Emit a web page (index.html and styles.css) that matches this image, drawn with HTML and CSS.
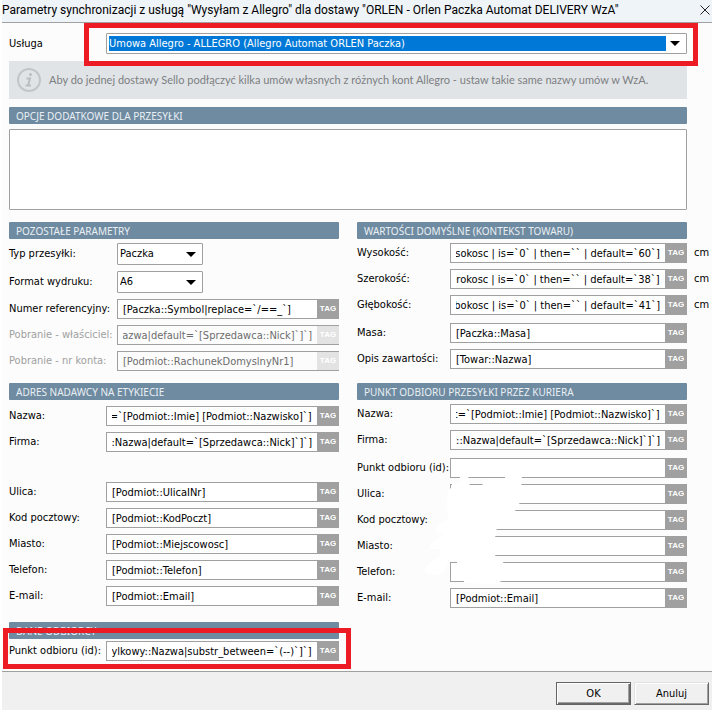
FILE: index.html
```
<!DOCTYPE html>
<html lang="pl">
<head>
    <meta charset="utf-8">
    <meta name="viewport" content="width=device-width, initial-scale=1" />
    <title>Parametry synchronizacji</title>
    <link rel="stylesheet" href="styles.css">
</head>
<body>
    <div class="titlebar">
        <h1>Parametry synchronizacji z usługą "Wysyłam z Allegro" dla dostawy "ORLEN - Orlen Paczka Automat DELIVERY WzA"</h1>
        <button type="button" class="close" aria-label="Zamknij">
            <svg width="10" height="10" viewBox="0 0 10 10"><path d="M0.5 0.5L9.5 9.5M9.5 0.5L0.5 9.5" stroke="#222" fill="none" /></svg>
        </button>
    </div>
    <form class="dialog">
        <div class="content">
            <div class="row service">
                <label for="usluga">Usługa</label>
                <div class="combo">
                    <select id="usluga" class="selected">
                        <option>Umowa Allegro - ALLEGRO (Allegro Automat ORLEN Paczka)</option>
                    </select>
                    <svg class="arrow" width="10" height="5" viewBox="0 0 10 5"><path d="M0 0H10L5 5Z" /></svg>
                </div>
            </div>
            <div class="info">
                <svg width="24" height="24" viewBox="0 0 24 24">
                    <circle cx="12" cy="12" r="11" fill="none" stroke="#c3c5c7" stroke-width="2" />
                    <circle cx="13.5" cy="6.5" r="1.5" fill="#bbbdbf" />
                    <path d="M9.5 10.5H13L11 17.5H14M8.5 17.5H11" fill="none" stroke="#bbbdbf" stroke-width="2" />
                </svg>
                <p>Aby do jednej dostawy Sello podłączyć kilka umów własnych z różnych kont Allegro - ustaw takie same nazwy umów w WzA.</p>
            </div>
            <h2 id="opcje">OPCJE DODATKOWE DLA PRZESYŁKI</h2>
            <textarea aria-labelledby="opcje"></textarea>

            <div class="columns">
                <section class="params">
                    <h2>POZOSTAŁE PARAMETRY</h2>
                    <div class="row">
                        <label for="typ">Typ przesyłki:</label>
                        <div class="combo small">
                            <select id="typ"><option>Paczka</option></select>
                            <svg class="arrow" width="10" height="5" viewBox="0 0 10 5"><path d="M0 0H10L5 5Z" /></svg>
                        </div>
                    </div>
                    <div class="row">
                        <label for="format">Format wydruku:</label>
                        <div class="combo small">
                            <select id="format"><option>A6</option></select>
                            <svg class="arrow" width="10" height="5" viewBox="0 0 10 5"><path d="M0 0H10L5 5Z" /></svg>
                        </div>
                    </div>
                    <div class="row">
                        <label for="numer">Numer referencyjny:</label>
                        <input id="numer" value="[Paczka::Symbol|replace=`/==_`]"><button type="button" class="tag">TAG</button>
                    </div>
                    <div class="row off">
                        <label for="wlasciciel">Pobranie - właściciel:</label>
                        <input id="wlasciciel" class="end" disabled value="[Podmiot::Nazwa|default=`[Sprzedawca::Nick]`]`]"><button type="button" class="tag" disabled>TAG</button>
                    </div>
                    <div class="row off">
                        <label for="konto">Pobranie - nr konta:</label>
                        <input id="konto" disabled value="[Podmiot::RachunekDomyslnyNr1]"><button type="button" class="tag" disabled>TAG</button>
                    </div>
                </section>

                <section>
                    <h2>WARTOŚCI DOMYŚLNE (KONTEKST TOWARU)</h2>
                    <div class="row">
                        <label for="wys">Wysokość:</label>
                        <input id="wys" class="end" value="[Towar::Wysokosc | is=`0` | then=`` | default=`60`]"><button type="button" class="tag">TAG</button>
                        <span class="unit">cm</span>
                    </div>
                    <div class="row">
                        <label for="szer">Szerokość:</label>
                        <input id="szer" class="end" value="[Towar::Szerokosc | is=`0` | then=`` | default=`38`]"><button type="button" class="tag">TAG</button>
                        <span class="unit">cm</span>
                    </div>
                    <div class="row">
                        <label for="gleb">Głębokość:</label>
                        <input id="gleb" class="end" value="[Towar::Glebokosc | is=`0` | then=`` | default=`41`]"><button type="button" class="tag">TAG</button>
                        <span class="unit">cm</span>
                    </div>
                    <div class="row apart">
                        <label for="masa">Masa:</label>
                        <input id="masa" value="[Paczka::Masa]"><button type="button" class="tag">TAG</button>
                    </div>
                    <div class="row">
                        <label for="opis">Opis zawartości:</label>
                        <input id="opis" value="[Towar::Nazwa]"><button type="button" class="tag">TAG</button>
                    </div>
                </section>

                <section class="sender">
                    <h2>ADRES NADAWCY NA ETYKIECIE</h2>
                    <div class="row apart">
                        <label for="n-nazwa">Nazwa:</label>
                        <input id="n-nazwa" class="end" value="[Podmiot::Nazwa|default=`[Podmiot::Imie] [Podmiot::Nazwisko]`]"><button type="button" class="tag">TAG</button>
                    </div>
                    <div class="row">
                        <label for="n-firma">Firma:</label>
                        <input id="n-firma" class="end" value="[Podmiot::Nazwa|default=`[Sprzedawca::Nick]`]`]"><button type="button" class="tag">TAG</button>
                    </div>
                    <div class="row street">
                        <label for="n-ulica">Ulica:</label>
                        <input id="n-ulica" value="[Podmiot::UlicaINr]"><button type="button" class="tag">TAG</button>
                    </div>
                    <div class="row">
                        <label for="n-kod">Kod pocztowy:</label>
                        <input id="n-kod" value="[Podmiot::KodPoczt]"><button type="button" class="tag">TAG</button>
                    </div>
                    <div class="row">
                        <label for="n-miasto">Miasto:</label>
                        <input id="n-miasto" value="[Podmiot::Miejscowosc]"><button type="button" class="tag">TAG</button>
                    </div>
                    <div class="row">
                        <label for="n-telefon">Telefon:</label>
                        <input id="n-telefon" value="[Podmiot::Telefon]"><button type="button" class="tag">TAG</button>
                    </div>
                    <div class="row">
                        <label for="n-email">E-mail:</label>
                        <input id="n-email" value="[Podmiot::Email]"><button type="button" class="tag">TAG</button>
                    </div>
                </section>

                <section class="pickup">
                    <h2>PUNKT ODBIORU PRZESYŁKI PRZEZ KURIERA</h2>
                    <div class="row">
                        <label for="p-nazwa">Nazwa:</label>
                        <input id="p-nazwa" class="end" value="[Podmiot::Nazwa|default=`[Podmiot::Imie] [Podmiot::Nazwisko]`]"><button type="button" class="tag">TAG</button>
                    </div>
                    <div class="row">
                        <label for="p-firma">Firma:</label>
                        <input id="p-firma" class="end" value="[Podmiot::Nazwa|default=`[Sprzedawca::Nick]`]`]"><button type="button" class="tag">TAG</button>
                    </div>
                    <div class="row apart">
                        <label for="p-punkt">Punkt odbioru (id):</label>
                        <input id="p-punkt"><button type="button" class="tag">TAG</button>
                    </div>
                    <div class="row">
                        <label for="p-ulica">Ulica:</label>
                        <input id="p-ulica"><button type="button" class="tag">TAG</button>
                    </div>
                    <div class="row">
                        <label for="p-kod">Kod pocztowy:</label>
                        <input id="p-kod"><button type="button" class="tag">TAG</button>
                    </div>
                    <div class="row">
                        <label for="p-miasto">Miasto:</label>
                        <input id="p-miasto"><button type="button" class="tag">TAG</button>
                    </div>
                    <div class="row">
                        <label for="p-telefon">Telefon:</label>
                        <input id="p-telefon"><button type="button" class="tag">TAG</button>
                    </div>
                    <div class="row">
                        <label for="p-email">E-mail:</label>
                        <input id="p-email" value="[Podmiot::Email]"><button type="button" class="tag">TAG</button>
                    </div>
                    <!-- white brush strokes over the address -->
                    <svg class="smear" width="110" height="120" viewBox="420 470 110 120" fill="#fff">
                        <path d="M460 474Q464 471 468 475L469 482L470 486H482L484 480L505 479V474Q514 472 522 475L521 490L519 506L514 512L496 530L494 548L496 560L503 561L505 578Q498 586 480 584L464 582V575L453 571V569L457 568V560H448Q447 572 438 575L426 574Q423 570 429 564L440 556V549H430Q428 546 436 540L445 534L437 533Q434 528 440 524L448 518L447 500Q447 490 452 487L452 483H460Z" />
                    </svg>
                </section>

                <section class="recipient">
                    <h2>DANE ODBIORCY</h2>
                    <div class="row">
                        <label for="o-punkt">Punkt odbioru (id):</label>
                        <input id="o-punkt" class="end" value="[PunktWysylkowy::Nazwa|substr_between=`(--)`]`]"><button type="button" class="tag">TAG</button>
                    </div>
                </section>
            </div>
        </div>
        <div class="footer">
            <button type="button" class="btn default">OK</button>
            <button type="button" class="btn">Anuluj</button>
        </div>
    </form>

    <script src="script.js"></script>
</body>
</html>
```
FILE: styles.css
```
* {
    box-sizing: border-box;
}

body {
    margin: 0 0 0 2px;
    min-height: 100vh;
    display: flex;
    flex-direction: column;
    background-color: #fff;
    color: #000;
    font-family: "DejaVu Sans Condensed", "DejaVu Sans", sans-serif;
    font-size: 11px;
    line-height: 14px;
}

input, select, textarea, button {
    margin: 0;
    font: inherit;
    color: inherit;
}

.titlebar {
    display: flex;
    align-items: center;
    justify-content: space-between;
    height: 23px;
    padding-bottom: 2px;
    border-bottom: 1px solid #a0a0a0;
    background-color: #eff4f9;
}

h1 {
    margin: 0;
    font-family: Roboto, sans-serif;
    font-size: 12px;
    font-weight: normal;
    line-height: 18px;
    white-space: nowrap;
}

.close {
    display: flex;
    padding: 0 2px;
    border: 0;
    background: none;
}

.dialog {
    flex: 1;
    display: flex;
    flex-direction: column;
    background-color: #fcfcfc;
}

.content {
    padding: 10px 25px 10px 7px;
}

h2 {
    height: 17px;
    margin: 0 0 4px;
    padding-left: 7px;
    border-radius: 1px;
    background-color: #6f8ba1;
    color: #e9eff4;
    font-family: "Noto Sans", sans-serif;
    font-size: 10px;
    font-weight: normal;
    line-height: 18px;
}

.row {
    display: flex;
    align-items: center;
    margin-bottom: 6px;
}

.row label {
    flex: none;
    width: 93px;
    white-space: nowrap;
}

.row input {
    flex: 1;
    min-width: 0;
    height: 20px;
    padding: 0 5px;
    border: 1px solid #a0a0a0;
    border-right: 0;
    border-radius: 0;
    background-color: #fff;
}

.apart {
    margin-top: 8px;
}

.service label, .sender label, .recipient label {
    width: 97px;
}

.params label {
    width: 108px;
}

.tag {
    width: 22px;
    height: 20px;
    padding: 0;
    border: 0;
    background-color: #a0a0a0;
    color: #fff;
    font-family: "Liberation Sans", sans-serif;
    font-size: 8px;
    font-weight: bold;
}

.off {
    color: #a0a0a0;
}

.off input {
    color: #6d6d6d;
    background-color: #fcfcfc;
}

.off .tag {
    border: 1px solid #a0a0a0;
    border-width: 1px 0;
    background-color: #e3e3e3;
    color: #fff;
}

.unit {
    width: 18px;
    margin: 0 -25px 0 7px;
}

.combo {
    flex: 1;
    display: flex;
    align-items: center;
    height: 21px;
    padding: 2px 6px 2px 2px;
    border: 1px solid #a0a0a0;
    border-radius: 1px;
    background-color: #fff;
}

.combo select {
    flex: 1;
    min-width: 0;
    height: 15px;
    padding: 0;
    border: 0;
    border-radius: 0;
    appearance: none;
    background: none;
}

.combo .selected {
    background-color: #0078d7;
    color: #fff;
}

.arrow {
    margin-left: 4px;
}

.small {
    flex: none;
    width: 86px;
    height: 22px;
}

/* red marker frames */
.service, .recipient .row {
    position: relative;
}

.service::after, .recipient .row::after {
    content: "";
    position: absolute;
    border: 5px solid #ed1c24;
    pointer-events: none;
}

.service::after {
    inset: -10px -11px -12px 75px;
}

.recipient .row::after {
    inset: -13px -12px -8px -6px;
}

.info {
    display: flex;
    align-items: center;
    gap: 8px;
    height: 38px;
    margin: 7px 0 8px;
    padding-left: 8px;
    background-color: #e1e4e7;
    color: #7c7f82;
    font-family: Lato, sans-serif;
    font-size: 11px;
}

.info p {
    margin: 0;
}

textarea {
    display: block;
    width: 100%;
    height: 81px;
    margin: 5px 0 12px;
    border: 1px solid #a0a0a0;
    border-radius: 1px;
    resize: none;
    background-color: #fff;
}

.columns {
    display: grid;
    grid-template-columns: 1fr 1fr;
    gap: 12px 18px;
}

.columns .row:last-of-type {
    margin-bottom: 0;
}

.sender .apart {
    margin-top: 6px;
}

.street {
    margin-top: 30px;
}

.pickup {
    position: relative;
}

.smear {
    position: absolute;
    left: 63px;
    top: 87px;
    pointer-events: none;
}

.recipient {
    margin-top: 2px;
}

.recipient h2 {
    margin-bottom: 2px;
}

.footer {
    flex: 1;
    display: flex;
    justify-content: flex-end;
    align-items: flex-start;
    gap: 3px;
    padding: 10px 3px 5px;
    border-top: 1px solid #a0a0a0;
    background-color: #f0f0f0;
}

.btn {
    width: 75px;
    height: 23px;
    padding: 0;
    border: 1px solid;
    border-color: #e3e3e3 #696969 #696969 #e3e3e3;
    background-color: #f0f0f0;
    box-shadow: inset 1px 1px #fff, inset -1px -1px #a0a0a0;
}

.default {
    border-color: #646464;
    box-shadow: inset 1px 1px #fff, inset -1px -1px #696969, inset -2px -2px #a0a0a0;
}
```
FILE: script.js
```
// long values are shown from their end
document.querySelectorAll('.end').forEach(function (el) {
    el.scrollLeft = el.scrollWidth;
});
```
